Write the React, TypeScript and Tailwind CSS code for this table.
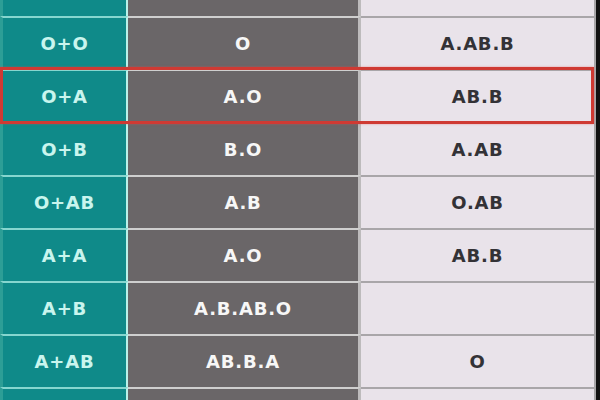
import React from "react";

interface Row {
  parents: string;
  possible: string;
  impossible: string;
}

const rows: Row[] = [
  { parents: "O+O", possible: "O", impossible: "A.AB.B" },
  { parents: "O+A", possible: "A.O", impossible: "AB.B" },
  { parents: "O+B", possible: "B.O", impossible: "A.AB" },
  { parents: "O+AB", possible: "A.B", impossible: "O.AB" },
  { parents: "A+A", possible: "A.O", impossible: "AB.B" },
  { parents: "A+B", possible: "A.B.AB.O", impossible: "" },
  { parents: "A+AB", possible: "AB.B.A", impossible: "O" },
];

const font = { fontFamily: '"DejaVu Sans", "Noto Sans CJK SC", sans-serif' };

const TableRow = ({ row, h, line }: { row?: Row; h: string; line: boolean }) => (
  <div className={`flex ${h}`}>
    <div
      className={`w-[128px] flex items-center justify-center bg-[#0f8a89] border-l-[3px] border-l-[#2d9e96] border-r-2 border-r-[#b9f2ea] text-[#c9f5ee] ${
        line ? "border-t-2 border-t-[#86d6cf]" : ""
      }`}
    >
      {row?.parents}
    </div>
    <div
      className={`w-[233px] flex items-center justify-center bg-[#6a6668] border-r-[3px] border-r-[#bdbbbc] text-[#f7f7f7] ${
        line ? "border-t-2 border-t-[#cfcfcf]" : ""
      }`}
    >
      {row?.possible}
    </div>
    <div
      className={`w-[235px] flex items-center justify-center bg-[#e9e3ea] border-r-2 border-r-[#a8a6a8] text-[#333236] ${
        line ? "border-t-2 border-t-[#a9a6a9]" : ""
      }`}
    >
      {row?.impossible}
    </div>
  </div>
);

export default function App() {
  return (
    <div className="w-[600px] h-[400px] overflow-hidden bg-[#111] flex">
      <div
        className="relative w-[596px] flex flex-col text-[18px] font-bold tracking-[0.8px]"
        style={font}
      >
        <TableRow h="h-[16px]" line={false} />
        {rows.map((r) => (
          <TableRow key={r.parents} row={r} h="h-[53px]" line />
        ))}
        <TableRow h="h-[13px]" line />

        {/* highlighted row */}
        <div className="absolute left-0 top-[67px] w-[594px] h-[57px] border-[3px] border-[#cf3a33] shadow-[0_0_2px_rgba(230,80,80,0.5)]" />
      </div>
    </div>
  );
}
